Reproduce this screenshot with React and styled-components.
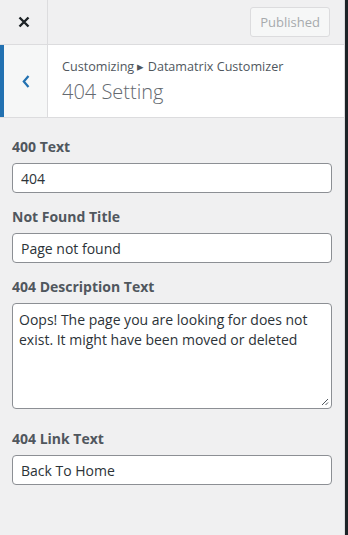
import React from 'react';
import styled, { createGlobalStyle } from 'styled-components';

const GlobalStyle = createGlobalStyle`
  html, body {
    margin: 0;
    padding: 0;
    background: #1d2327;
  }
  body {
    font-family: "Open Sans", "Noto Sans", sans-serif;
  }
`;

const Frame = styled.div`
  display: flex;
  height: 535px;
`;

const Panel = styled.div`
  width: 344px;
  border-right: 1px solid #dcdcde;
  background: #f0f0f1;
  display: flex;
  flex-direction: column;
`;

const Header = styled.div`
  height: 44px;
  display: flex;
  align-items: stretch;
  border-bottom: 1px solid #dcdcde;
  background: #f0f0f1;
`;

const CloseButton = styled.div`
  width: 47px;
  border-right: 1px solid #dcdcde;
  display: flex;
  align-items: center;
  justify-content: center;
  color: #1d2327;
`;

const HeaderSpacer = styled.div`
  flex: 1;
  display: flex;
  align-items: center;
  justify-content: flex-end;
  padding-right: 14px;
`;

const PublishButton = styled.div`
  height: 28px;
  padding: 0 9px;
  display: flex;
  align-items: center;
  border: 1px solid #dcdcde;
  border-radius: 3px;
  background: #f6f7f7;
  color: #a7aaad;
  font-size: 13px;
`;

const SectionHead = styled.div`
  display: flex;
  height: 72px;
  background: #fff;
  border-bottom: 1px solid #dcdcde;
`;

const BackButton = styled.div`
  width: 43px;
  border-left: 4px solid #2271b1;
  border-right: 1px solid #dcdcde;
  background: #f6f7f7;
  display: flex;
  align-items: center;
  justify-content: center;
  color: #2271b1;
`;

const Titles = styled.div`
  padding: 12px 14px 0 14px;
  display: flex;
  flex-direction: column;
`;

const Crumb = styled.div`
  font-size: 12.6px;
  color: #50575e;
  line-height: 20px;
`;

const Heading = styled.div`
  font-size: 20px;
  font-weight: 300;
  color: #646970;
  line-height: 28px;
  margin-top: 1px;
`;

const Body = styled.div`
  padding: 19px 12px 0 12px;
  display: flex;
  flex-direction: column;
`;

const Field = styled.div`
  display: flex;
  flex-direction: column;
  margin-bottom: ${p => p.$gap || 14}px;
`;

const Label = styled.div`
  font-size: 14px;
  font-weight: 700;
  color: #50575e;
  line-height: 20px;
  margin-bottom: 6px;
`;

const Input = styled.div`
  height: 28px;
  border: 1px solid #8c8f94;
  border-radius: 4px;
  background: #fff;
  padding: 0 8px;
  display: flex;
  align-items: center;
  font-size: 14px;
  color: #2c3338;
`;

const TextArea = styled.div`
  position: relative;
  height: 92px;
  border: 1px solid #8c8f94;
  border-radius: 4px;
  background: #fff;
  padding: 6px 6px;
  font-size: 14px;
  line-height: 20px;
  color: #2c3338;
`;

const Grip = styled.svg`
  position: absolute;
  right: 2px;
  bottom: 2px;
`;

export default function App() {
  return (
    <Frame>
      <GlobalStyle />
      <Panel>
        <Header>
          <CloseButton>
            <svg width="12" height="12" viewBox="0 0 12 12">
              <path d="M1.5 1.5 L10.5 10.5 M10.5 1.5 L1.5 10.5" stroke="currentColor" strokeWidth="2.4" />
            </svg>
          </CloseButton>
          <HeaderSpacer>
            <PublishButton>Published</PublishButton>
          </HeaderSpacer>
        </Header>
        <SectionHead>
          <BackButton>
            <svg width="8" height="13" viewBox="0 0 8 13">
              <path d="M6.5 1 L1.8 6.5 L6.5 12" stroke="currentColor" strokeWidth="2.2" fill="none" />
            </svg>
          </BackButton>
          <Titles>
            <Crumb>Customizing ▸ Datamatrix Customizer</Crumb>
            <Heading>404 Setting</Heading>
          </Titles>
        </SectionHead>
        <Body>
          <Field>
            <Label>400 Text</Label>
            <Input>404</Input>
          </Field>
          <Field>
            <Label>Not Found Title</Label>
            <Input>Page not found</Input>
          </Field>
          <Field $gap={20}>
            <Label>404 Description Text</Label>
            <TextArea>
              Oops! The page you are looking for does not exist. It might have been moved or deleted
              <Grip width="8" height="8" viewBox="0 0 8 8">
                <path d="M7 1 L1 7 M7 4.5 L4.5 7" stroke="#50575e" strokeWidth="1" />
              </Grip>
            </TextArea>
          </Field>
          <Field>
            <Label>404 Link Text</Label>
            <Input>Back To Home</Input>
          </Field>
        </Body>
      </Panel>
    </Frame>
  );
}
